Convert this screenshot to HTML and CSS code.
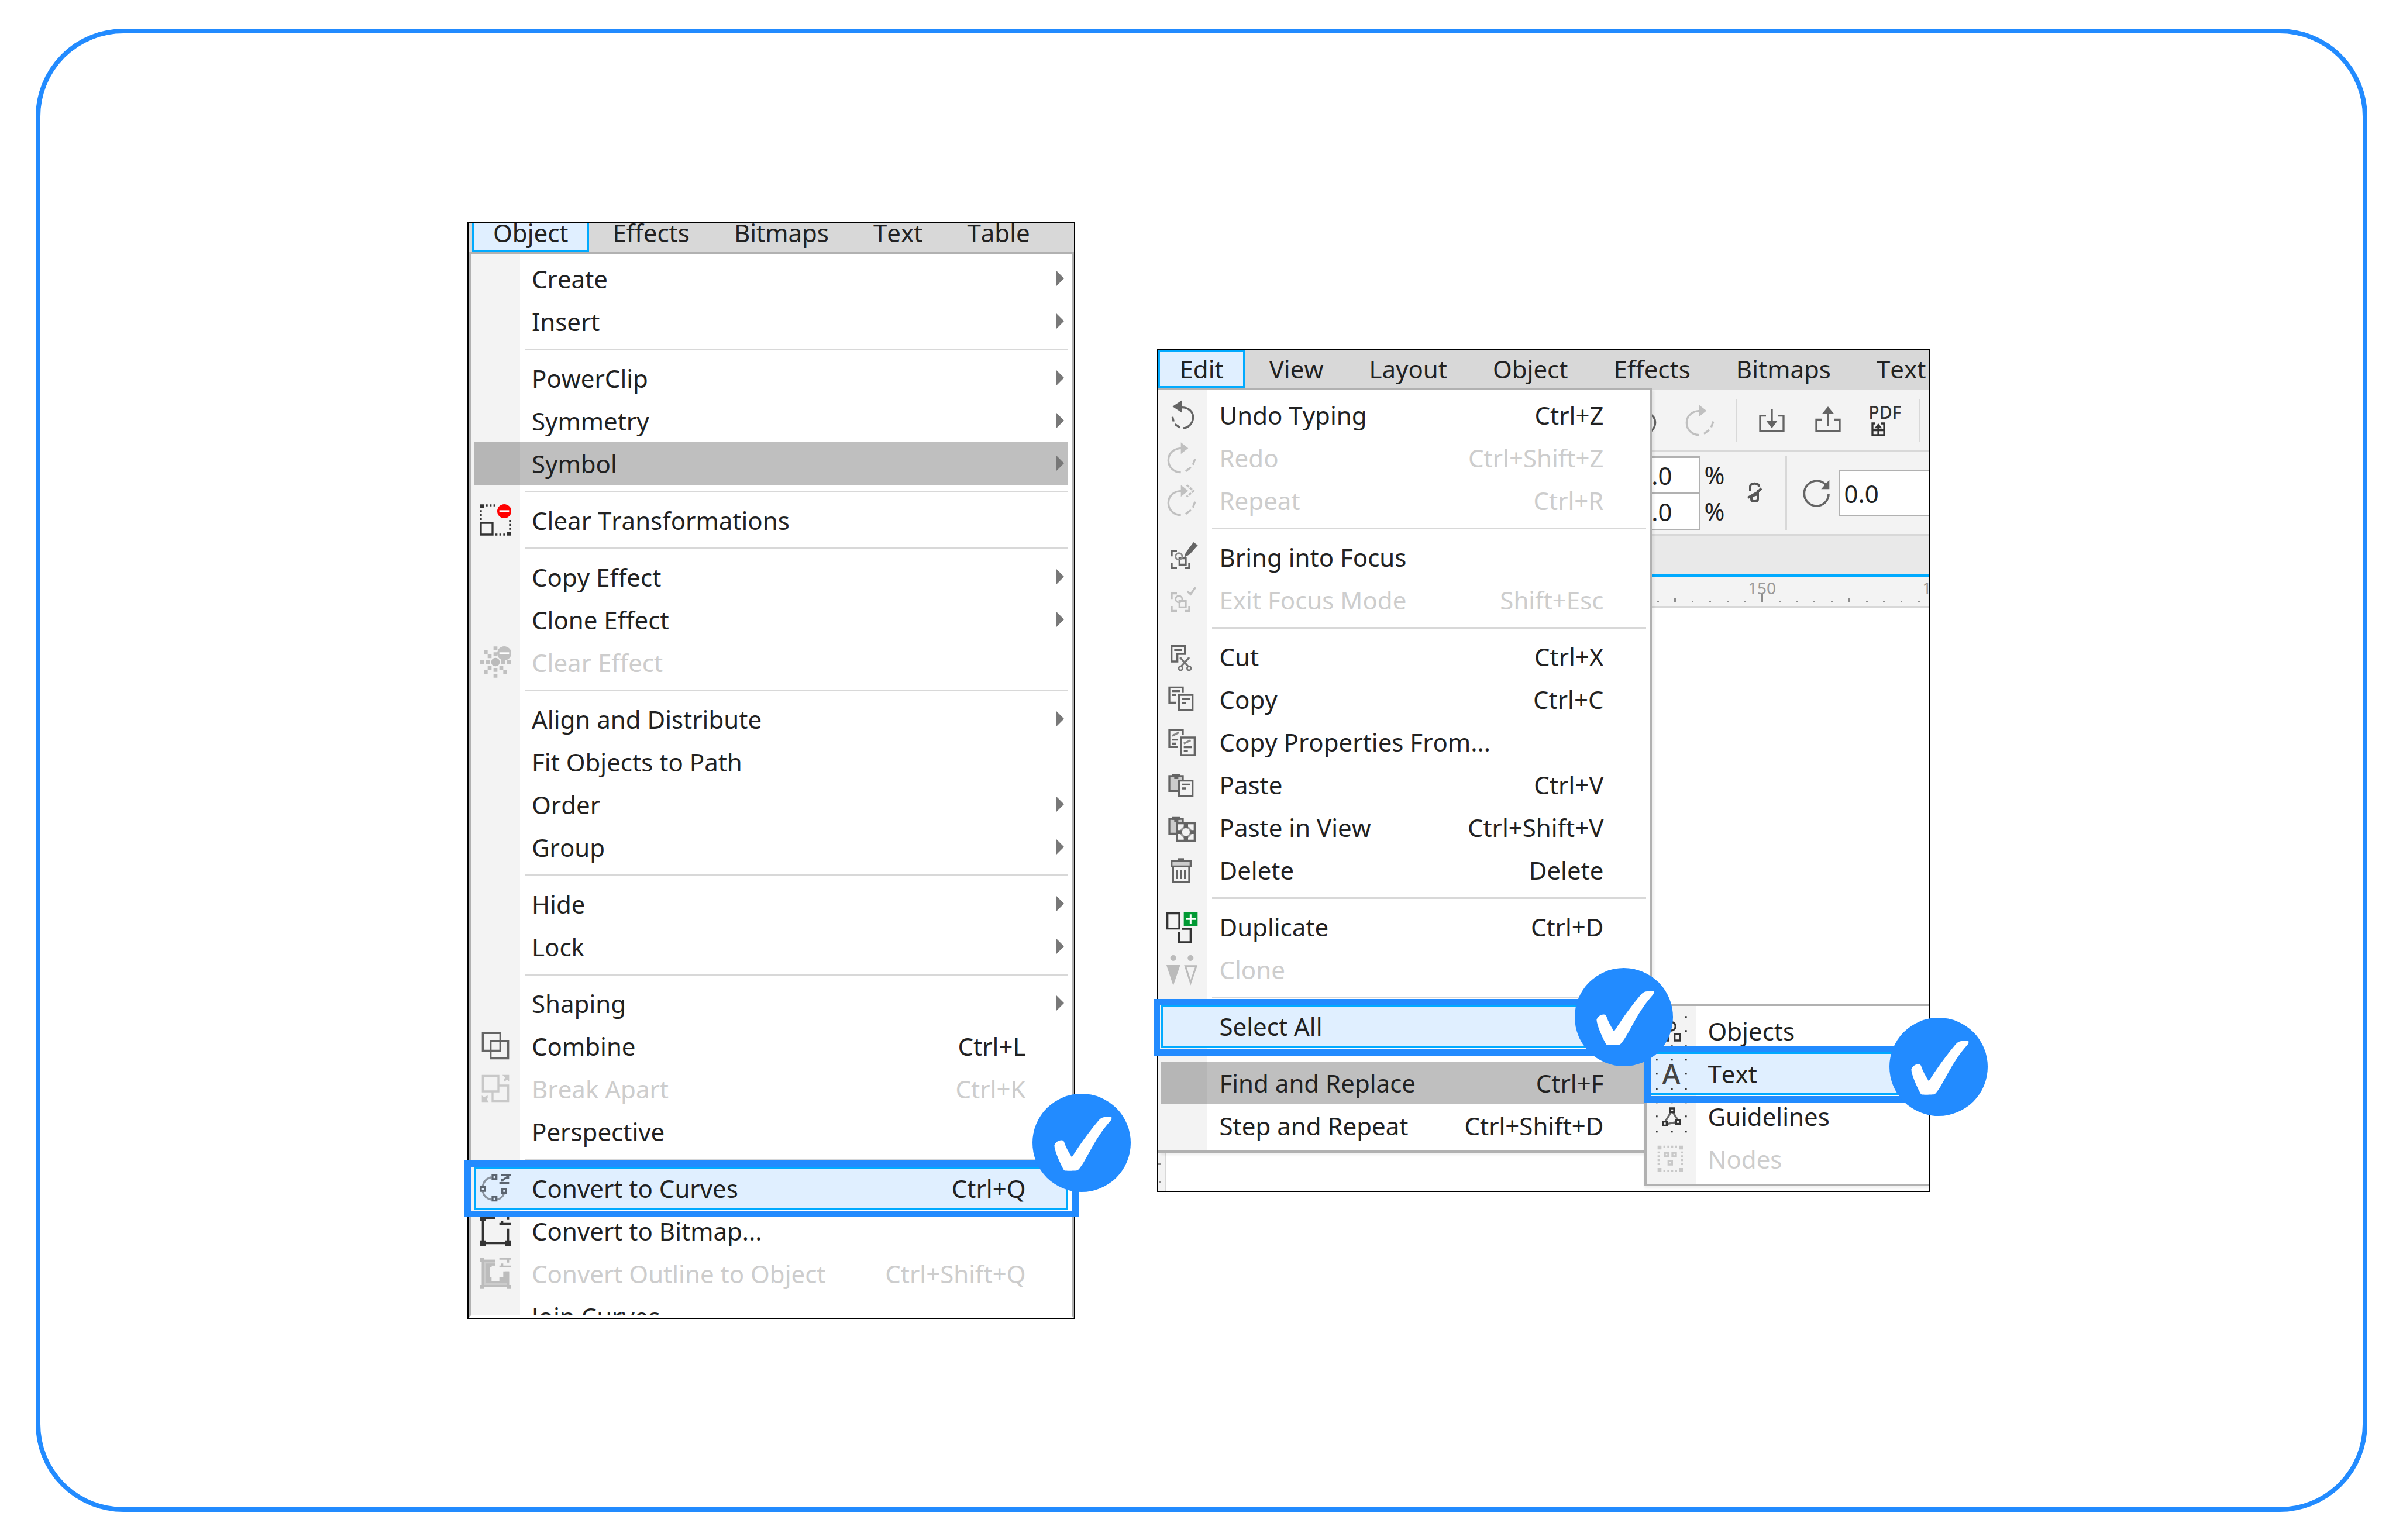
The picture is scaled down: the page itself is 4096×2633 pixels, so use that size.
FILE: index.html
```html
<!DOCTYPE html>
<html lang="en">
<head>
<meta charset="utf-8">
<title>Convert text to curves</title>
<link rel="stylesheet" href="styles.css">
</head>
<body>
<svg class="sprite" aria-hidden="true">
  <symbol id="arrow" viewBox="0 0 14 28"><path d="M0 0L14 14L0 28Z" fill="#787878"/></symbol>
  <symbol id="check" viewBox="0 0 168 168">
    <circle cx="84" cy="84" r="84" fill="#228bff"/>
    <path d="M37.4 88.5C39 83.500 43.500 79.500 49.600 79.500C52.500 79.500 53.800 81 54.600 83.800C57 91 61.500 99.500 67.200 108.500C72 101.500 76 95 80.200 88.900C90 74.500 101 60 112.600 46.200C115.500 42.800 118 41 121.500 40.200C126 39.300 130.500 39.200 134 39.600C136 40 135.800 42.500 134 45.400C129 51.500 123.500 57.500 118.400 65C106 82.500 96 103 87.800 116.700C84.500 122 81 127.500 77.500 130.800C74 131.900 59 131.900 55.700 131.600C53.500 131 53 129 51.500 126.500C46.500 117 37.800 97.500 37.400 88.500Z" fill="#fff"/>
  </symbol>
  <symbol id="undo" viewBox="0 0 18 18">
    <path d="M8 5C12 4.800 14.300 7.300 14.300 10C14.300 13 12 15.500 9 15.600" fill="none" stroke="currentColor" stroke-width="1"/>
    <path d="M7.500 15.300L5 13.600M4.300 12.200L3.700 9.800" fill="none" stroke="currentColor" stroke-width="1"/>
    <path d="M3.700 4.500L8.700 1.200V7.800Z" fill="currentColor"/>
  </symbol>
  <symbol id="redo" viewBox="0 0 18 18">
    <path d="M8.500 4C4.500 4 1.600 6.500 1.600 10.200C1.600 13.800 4.500 16.400 8 16.400" fill="none" stroke="currentColor" stroke-width="1"/>
    <path d="M10.500 15.800L13.200 13.800M14.200 12.500L15.300 9.500" fill="none" stroke="currentColor" stroke-width="1"/>
    <path d="M11.800 4L8 1V7Z" fill="currentColor"/>
  </symbol>
  <symbol id="clip" viewBox="0 0 18 18">
    <path d="M2.100 4.500H9V12.100H2.100Z" fill="#ccc" stroke="#646464"/>
    <path d="M3.500 3.500H7.700V5H6.700V6H4.600V5H3.500Z" fill="#646464"/>
  </symbol>
  <symbol id="dots" viewBox="0 0 18 18">
    <path d="M1.200 1.700h.8M9 1.700h.8M16.200 1.700h.8M1.200 8.900h.8M16.200 8.900h.8M1.200 16.700h.8M9 16.700h.8M16.200 16.700h.8" stroke="#333" stroke-width=".9"/>
  </symbol>
</svg>
<main class="frame">
  <section class="shot shot-object" aria-label="Object menu">
    <nav class="menubar menubar-cut">
      <button class="tab tab-open">Object</button>
      <button class="tab">Effects</button>
      <button class="tab">Bitmaps</button>
      <button class="tab">Text</button>
      <button class="tab">Table</button>
    </nav>
    <ul class="menu">
      <li><button class="row"><span class="icon"></span><span class="label">Create</span><svg class="arrow"><use href="#arrow"/></svg></button></li>
      <li><button class="row"><span class="icon"></span><span class="label">Insert</span><svg class="arrow"><use href="#arrow"/></svg></button></li>
      <li class="sep"></li>
      <li><button class="row"><span class="icon"></span><span class="label">PowerClip</span><svg class="arrow"><use href="#arrow"/></svg></button></li>
      <li><button class="row"><span class="icon"></span><span class="label">Symmetry</span><svg class="arrow"><use href="#arrow"/></svg></button></li>
      <li><button class="row row-dim"><span class="icon"></span><span class="label">Symbol</span><svg class="arrow"><use href="#arrow"/></svg></button></li>
      <li class="sep"></li>
      <li><button class="row">
        <svg class="icon" viewBox="0 0 18 18">
          <path d="M1 1h2v2h-2zM4 1h1v1h-1zM6 1h1v1h-1zM8 1h1v1h-1zM1 4h1v1h-1zM1 6h1v1h-1zM1 8h1v1h-1zM9 16h1v1h-1zM11 16h1v1h-1zM13 16h1v1h-1zM15 15h2v2h-2zM16 9h1v1h-1zM16 11h1v1h-1zM16 13h1v1h-1z" fill="#333"/>
          <path d="M1.500 10.500h6v6h-6z" fill="none" stroke="#333"/>
          <circle cx="13.500" cy="4.500" r="3.600" fill="#f00"/><path d="M11 4h5v1h-5z" fill="#fff"/>
        </svg>
        <span class="label">Clear Transformations</span></button></li>
      <li class="sep"></li>
      <li><button class="row"><span class="icon"></span><span class="label">Copy Effect</span><svg class="arrow"><use href="#arrow"/></svg></button></li>
      <li><button class="row"><span class="icon"></span><span class="label">Clone Effect</span><svg class="arrow"><use href="#arrow"/></svg></button></li>
      <li><button class="row" disabled>
        <svg class="icon" viewBox="0 0 18 18">
          <path d="M8 1h2v2h-2zM8 4h2v2h-2zM3 3h2v2h-2zM5 5h2v2h-2zM1 8h2v2h-2zM4 8h2v2h-2zM12 8h2v2h-2zM15 8h2v2h-2zM5 11h2v2h-2zM3 13h2v2h-2zM8 12h2v2h-2zM8 15h2v2h-2zM11 11h2v2h-2zM13 13h2v2h-2z" fill="#c0c0c0"/>
          <circle cx="9" cy="9" r="2.200" fill="#bbb"/>
          <circle cx="13.500" cy="4.500" r="3.600" fill="#c0c0c0"/><path d="M11 4h5v1h-5z" fill="#fff"/>
        </svg>
        <span class="label">Clear Effect</span></button></li>
      <li class="sep"></li>
      <li><button class="row"><span class="icon"></span><span class="label">Align and Distribute</span><svg class="arrow"><use href="#arrow"/></svg></button></li>
      <li><button class="row"><span class="icon"></span><span class="label">Fit Objects to Path</span></button></li>
      <li><button class="row"><span class="icon"></span><span class="label">Order</span><svg class="arrow"><use href="#arrow"/></svg></button></li>
      <li><button class="row"><span class="icon"></span><span class="label">Group</span><svg class="arrow"><use href="#arrow"/></svg></button></li>
      <li class="sep"></li>
      <li><button class="row"><span class="icon"></span><span class="label">Hide</span><svg class="arrow"><use href="#arrow"/></svg></button></li>
      <li><button class="row"><span class="icon"></span><span class="label">Lock</span><svg class="arrow"><use href="#arrow"/></svg></button></li>
      <li class="sep"></li>
      <li><button class="row"><span class="icon"></span><span class="label">Shaping</span><svg class="arrow"><use href="#arrow"/></svg></button></li>
      <li><button class="row">
        <svg class="icon" viewBox="0 0 18 18"><path d="M2.500 2.500h9v9h-9zM6.500 6.500h9v9h-9z" fill="none" stroke="#646464"/></svg>
        <span class="label">Combine</span><kbd class="keys">Ctrl+L</kbd></button></li>
      <li><button class="row" disabled>
        <svg class="icon" viewBox="0 0 18 18"><path d="M2.500 2.500h8v8h-8zM10.500 7.500h5v8h-8v-5" fill="none" stroke="#c8c8c8"/><path d="M12.500 2H16V5.500L15 4.500L13.500 5.500V4L14 3.500ZM5.500 16H2V12.500L3 13.500L5 12.500V14L4.500 14.500Z" fill="#c8c8c8"/></svg>
        <span class="label">Break Apart</span><kbd class="keys">Ctrl+K</kbd></button></li>
      <li><button class="row"><span class="icon"></span><span class="label">Perspective</span></button></li>
      <li class="sep"></li>
      <li class="marked"><button class="row row-active">
        <svg class="icon" viewBox="0 0 18 18">
          <path d="M7 3.500C4.500 4 3 5.800 2.500 8M2.500 11C3 13 4.500 14.600 7 15M10 15C11.500 14.500 12.800 13.500 13.300 12" fill="none" stroke="#8a939e"/>
          <path d="M7.500 2.500h2v2h-2zM1.500 8.500h2v2h-2zM7.500 13.500h2v2h-2zM12.500 9.500h2v2h-2z" fill="#e0efff" stroke="#5b646f"/>
          <path d="M12 2.500H17M15.500 3V4.500M15.500 3L12 5.500M11 6.500H16M12.500 5.800V4.500" fill="none" stroke="#5b646f"/>
        </svg>
        <span class="label">Convert to Curves</span><kbd class="keys">Ctrl+Q</kbd></button>
        <span class="mark mark-curves"></span><svg class="badge badge-curves"><use href="#check"/></svg></li>
      <li><button class="row">
        <svg class="icon" viewBox="0 0 18 18">
          <path d="M1 1h3v3h-3zM1 14h3v3h-3zM14 14h3v3h-3z" fill="#333"/>
          <path d="M2.500 2.500V15.500H15.500V8M2.500 2.500H9M12 1.500H17M15.500 2V3.500M11 5.500H17M12.500 5V4" fill="none" stroke="#333"/>
        </svg>
        <span class="label">Convert to Bitmap...</span></button></li>
      <li><button class="row" disabled>
        <svg class="icon" viewBox="0 0 18 18">
          <path d="M2 2H9V5H7V6H6V13H13V12H14V8H16V16H2Z" fill="#ccc"/>
          <path d="M4 4H9V5H7V6H6V11H7V13H11V11H13V8H15V14H4Z" fill="#bcbcbc"/>
          <path d="M1 1h2v2h-2zM1 15h2v2h-2zM15 15h2v2h-2z" fill="#bcbcbc"/>
          <path d="M2.500 2.500V15.500H15.500V8M2.500 2.500H9M11 1.500H17M15.500 2V3.500M11 5.500H17M12.500 5V4" fill="none" stroke="#bcbcbc"/>
        </svg>
        <span class="label">Convert Outline to Object</span><kbd class="keys">Ctrl+Shift+Q</kbd></button></li>
      <li class="cut"><button class="row"><span class="icon"></span><span class="label">Join Curves</span></button></li>
    </ul>
  </section>

  <section class="shot shot-edit" aria-label="Edit menu">
    <nav class="menubar">
      <button class="tab tab-open">Edit</button>
      <button class="tab">View</button>
      <button class="tab">Layout</button>
      <button class="tab">Object</button>
      <button class="tab">Effects</button>
      <button class="tab">Bitmaps</button>
      <button class="tab">Text</button>
    </nav>
    <div class="stage">
      <div class="workspace">
        <div class="toolbar">
          <svg class="icon tool"><use href="#undo"/></svg>
          <svg class="icon tool tool-off"><use href="#redo"/></svg>
          <span class="rule"></span>
          <svg class="icon" viewBox="0 0 18 18"><path d="M6 6.500H3V14.500H15V6.500H12M9 3V11" fill="none" stroke="#646464"/><path d="M6 9H12L9 13Z" fill="#646464"/></svg>
          <svg class="icon" viewBox="0 0 18 18"><path d="M6 8.500H3V14.500H15V8.500H12M9 4V12" fill="none" stroke="#646464"/><path d="M6 5.500H12L9 1.800Z" fill="#646464"/></svg>
          <svg class="icon" viewBox="0 0 18 18"><text class="pdf" x="1" y="8">PDF</text><path d="M4.500 10.500H3V16.500H9V10.500H7.500M6 11V16.500M3.500 14H8.500" fill="none" stroke="#333"/><path d="M4 13H8L6 10.500Z" fill="#333"/></svg>
          <span class="rule"></span>
        </div>
        <div class="propbar">
          <div class="scales">
            <label class="scale"><input class="field" value="100.0">%</label>
            <label class="scale"><input class="field" value="100.0">%</label>
          </div>
          <svg class="lock" viewBox="0 0 40 40"><path d="M11 17V9C11 2 26 2 26 9M30 12L25 17M24 14V31C24 35 13 35 13 31V25L24 22M7 28L23 19" fill="none" stroke="#555" stroke-width="4"/></svg>
          <span class="rule rule-tall"></span>
          <svg class="icon spin" viewBox="0 0 18 18"><path d="M14.500 5.500C13 3.500 11.500 2.700 9.500 2.700C5.800 2.700 2.800 5.500 2.800 9.200C2.800 12.800 5.500 15.600 9 15.600C12.500 15.600 15.300 13 15.300 9.500" fill="none" stroke="#646464" stroke-width="1.100"/><path d="M15.700 2.200V7H11.500Z" fill="#646464"/></svg>
          <input class="field angle" aria-label="Angle of rotation" value="0.0">
        </div>
        <div class="doctabs"></div>
        <svg class="ruler" viewBox="0 0 474 50">
          <path d="M187 30h3v14h-3zM38 36h3v8h-3zM336 36h3v8h-3zM9 41h3v3h-3zM68 41h3v3h-3zM98 41h3v3h-3zM128 41h3v3h-3zM157 41h3v3h-3zM217 41h3v3h-3zM247 41h3v3h-3zM276 41h3v3h-3zM306 41h3v3h-3zM366 41h3v3h-3zM395 41h3v3h-3zM425 41h3v3h-3zM455 41h3v3h-3z" fill="#8c8c8c"/>
          <text class="num" x="188" y="30">150</text><text class="num" x="486" y="30">160</text>
        </svg>
        <div class="canvas">
          <div class="vruler"><svg class="vticks" viewBox="0 0 5 65"><path d="M0 18h5v3h-5zM2 48h3v3h-3z" fill="#8c8c8c"/></svg></div>
        </div>
      </div>

      <ul class="menu menu-edit">
        <li><button class="row"><svg class="icon tool"><use href="#undo"/></svg><span class="label">Undo Typing</span><kbd class="keys">Ctrl+Z</kbd></button></li>
        <li><button class="row" disabled><svg class="icon tool-off"><use href="#redo"/></svg><span class="label">Redo</span><kbd class="keys">Ctrl+Shift+Z</kbd></button></li>
        <li><button class="row" disabled><svg class="icon tool-off" viewBox="0 0 18 18"><use href="#redo"/><path d="M11 1L14.500 4L11 7" fill="none" stroke="currentColor" stroke-dasharray="1.500 .6"/></svg><span class="label">Repeat</span><kbd class="keys">Ctrl+R</kbd></button></li>
        <li class="sep"></li>
        <li><button class="row">
          <svg class="icon tool" viewBox="0 0 18 18"><path d="M6 5.600H3.300V8.500M3.300 12V14.500H6M10 14.500H12.300V12M7.300 9.500h3.200v3.200h-3.200z" fill="none" stroke="currentColor"/><circle cx="7" cy="8.500" r="1.700" fill="none" stroke="#8a8a8a" stroke-width=".8"/><path d="M9.700 9L10.500 6.500L14.500 1.200L16.700 2.800L12.500 7.500Z" fill="currentColor"/></svg>
          <span class="label">Bring into Focus</span></button></li>
        <li><button class="row" disabled>
          <svg class="icon tool-off" viewBox="0 0 18 18"><path d="M6 5.600H3.300V8.500M3.300 12V14.500H6M10 14.500H12.300V12M7.300 9.500h3.200v3.200h-3.200zM11.300 4.500L13 6L15.500 2.500" fill="none" stroke="currentColor"/><circle cx="7" cy="8.500" r="1.700" fill="none" stroke="currentColor" stroke-width=".8"/></svg>
          <span class="label">Exit Focus Mode</span><kbd class="keys">Shift+Esc</kbd></button></li>
        <li class="sep"></li>
        <li><button class="row">
          <svg class="icon" viewBox="0 0 18 18"><path d="M3.200 3.500H10.100V7.500H6.200V11.400H3.200ZM4.600 5.500H8.600" fill="none" stroke="#646464"/><path d="M7.600 9.300L11.900 14.100M12.300 9.300L8 14.100" stroke="#757575"/><circle cx="7.900" cy="14.900" r="1" fill="none" stroke="#757575" stroke-width=".8"/><circle cx="12.200" cy="14.900" r="1" fill="none" stroke="#757575" stroke-width=".8"/></svg>
          <span class="label">Cut</span><kbd class="keys">Ctrl+X</kbd></button></li>
        <li><button class="row">
          <svg class="icon" viewBox="0 0 18 18"><path d="M5.500 10.600H2.100V2.800H9V5.300M3.500 4.700H7.700M3.500 6.700H5.500M7.100 6.600H14V14.400H7.100ZM8.500 8.800H12.700M8.500 10.800H10.600" fill="none" stroke="#646464"/></svg>
          <span class="label">Copy</span><kbd class="keys">Ctrl+C</kbd></button></li>
        <li><button class="row">
          <svg class="icon" viewBox="0 0 18 18"><path d="M6.500 11.500H2.100V2.600H9V5.300M3.500 7.700H6.500M3.500 9.700H5.500M8.200 6.600H15.100V15.600H8.200ZM9.500 11.600H13.500M9.500 13.600H11.600" fill="none" stroke="#646464"/><path d="M3.500 5.700L5 5L7 4M9.500 9.700L11 9L13 8" fill="none" stroke="#888"/></svg>
          <span class="label">Copy Properties From...</span></button></li>
        <li><button class="row">
          <svg class="icon" viewBox="0 0 18 18"><use href="#clip"/><path d="M7.100 6.800H14V14.600H7.100ZM8.500 8.800H12.700M8.500 10.800H10.600" fill="#f3f3f3" stroke="#646464"/></svg>
          <span class="label">Paste</span><kbd class="keys">Ctrl+V</kbd></button></li>
        <li><button class="row">
          <svg class="icon" viewBox="0 0 18 18"><use href="#clip"/><path d="M6.100 6.800H15.100V15.700H6.100Z" fill="#f3f3f3" stroke="#646464"/><circle cx="10.600" cy="11.300" r="2.500" fill="none" stroke="#999"/><path d="M9.500 7h2.200v2h-2.200zM9.500 13.500h2.200v2h-2.200zM6.500 10.300h2v2h-2zM12.700 10.300h2v2h-2z" fill="#646464"/></svg>
          <span class="label">Paste in View</span><kbd class="keys">Ctrl+Shift+V</kbd></button></li>
        <li><button class="row">
          <svg class="icon" viewBox="0 0 18 18"><path d="M3.200 4.300H13V7H3.200Z" fill="#ccc" stroke="#646464"/><path d="M6.600 2.800h3v1.500h-3z" fill="#646464"/><path d="M4 7.500V14.900H12.300V7.500M6.100 9V13.500M8.100 9V13.500M10.100 9V13.500" fill="none" stroke="#646464"/></svg>
          <span class="label">Delete</span><kbd class="keys">Delete</kbd></button></li>
        <li class="sep"></li>
        <li><button class="row">
          <svg class="icon" viewBox="0 0 18 18"><path d="M1.100 2H7.200V9.800H1.100ZM8.500 9.900H13V16.800H7.100V11.500" fill="none" stroke="#333"/><path d="M9.500 1.400h7.100v7h-7.100z" fill="#093"/><path d="M10.500 4.900H15.600M13 2.500V7.300" stroke="#fff" stroke-width=".9"/></svg>
          <span class="label">Duplicate</span><kbd class="keys">Ctrl+D</kbd></button></li>
        <li><button class="row" disabled>
          <svg class="icon" viewBox="0 0 18 18"><circle cx="4.100" cy="3" r="1.500" fill="#bbb"/><circle cx="13" cy="3" r="1.500" fill="#bbb"/><path d="M.6 6.600H7.700L4.100 17.200Z" fill="#bbb"/><path d="M10.300 7.100H15.900L13 15.600Z" fill="none" stroke="#bbb" stroke-width=".9"/></svg>
          <span class="label">Clone</span></button></li>
        <li class="sep"></li>
        <li class="marked"><button class="row row-active"><span class="icon"></span><span class="label">Select All</span></button>
          <span class="mark mark-all"></span></li>
        <li class="sep"></li>
        <li><button class="row row-dim"><span class="icon"></span><span class="label">Find and Replace</span><kbd class="keys">Ctrl+F</kbd></button></li>
        <li><button class="row"><span class="icon"></span><span class="label">Step and Repeat</span><kbd class="keys">Ctrl+Shift+D</kbd></button></li>
      </ul>

      <ul class="menu submenu">
        <li><button class="row">
          <svg class="icon" viewBox="0 0 18 18"><use href="#dots"/><path d="M10.700 10.600h2.800v3.200h-2.800zM4.500 10.600h3v3.200h-3z" fill="none" stroke="#333"/><circle cx="9" cy="6.500" r="2.200" fill="none" stroke="#333"/></svg>
          <span class="label">Objects</span></button></li>
        <li class="marked"><button class="row row-active">
          <svg class="icon" viewBox="0 0 18 18"><use href="#dots"/><text class="glyph" x="9" y="14">A</text></svg>
          <span class="label">Text</span></button>
          <span class="mark mark-text"></span><svg class="badge badge-text"><use href="#check"/></svg></li>
        <li><button class="row">
          <svg class="icon" viewBox="0 0 18 18"><use href="#dots"/><path d="M8.700 7L6 11.500M10 7L12.500 11M7 12.800L11 12" stroke="#666"/><path d="M8.500 4.800h2v2h-2zM4.700 11.600h2v2h-2zM11.500 10.700h2v2h-2z" fill="#f3f3f3" stroke="#333"/></svg>
          <span class="label">Guidelines</span></button></li>
        <li><button class="row" disabled>
          <svg class="icon" viewBox="0 0 18 18"><path d="M2 2h2v2h-2zM13 2h2v2h-2zM2 13.500h2v2h-2zM13 13.500h2v2h-2zM5 2h1v1h-1zM7 2h1v1h-1zM9 2h1v1h-1zM11 2h1v1h-1zM5 14.500h1v1h-1zM7 14.500h1v1h-1zM9 14.500h1v1h-1zM11 14.500h1v1h-1zM2 5h1v1h-1zM2 7h1v1h-1zM2 9h1v1h-1zM2 11h1v1h-1zM14 5h1v1h-1zM14 7h1v1h-1zM14 9h1v1h-1zM14 11h1v1h-1z" fill="#c8c8c8"/><path d="M5.700 5.700h1.800v1.800h-1.800zM9.600 5.700h1.800v1.800h-1.800zM7.600 9.900h1.800v1.800h-1.800z" fill="none" stroke="#c8c8c8"/></svg>
          <span class="label">Nodes</span></button></li>
      </ul>
      <svg class="badge badge-all"><use href="#check"/></svg>
    </div>
  </section>
</main>
</body>
</html>
```
FILE: styles.css
```css
* {
  box-sizing: border-box;
}

body {
  margin: 0;
  background: #fff;
  color: #222;
  font: 42px/73px "Noto Sans", sans-serif;
  font-kerning: none;
}

button,
input,
kbd {
  font: inherit;
  font-kerning: none;
  color: inherit;
}

ul {
  margin: 0;
  padding: 0;
  list-style: none;
}

svg {
  display: block;
  flex: none;
}

.sprite {
  position: absolute;
  width: 0;
  height: 0;
}

.frame {
  display: flex;
  align-items: center;
  gap: 140px;
  min-height: calc(100vh - 97px);
  margin: 49px 49px 48px 61px;
  padding: 0 739px 0 730px;
  border: 8px solid #228bff;
  border-radius: 150px;
}

.shot {
  min-width: 0;
  border: 2px solid #000;
  background: #fff;
}

.shot-object {
  flex: 1039 1 0;
}

.shot-edit {
  flex: 1322 1 0;
}

/* Menu bar */
.menubar {
  display: flex;
  gap: 6px;
  overflow: hidden;
  background: #d8d8d8;
}

.menubar-cut {
  align-items: flex-end;
  gap: 4px;
  height: 49px;
  padding-left: 6px;
}

.tab {
  flex: none;
  height: 65px;
  padding: 0 33px;
  border: 3px solid transparent;
  background: none;
  line-height: 59px;
}

.tab-open {
  border-color: #00aaff;
  background: #e0efff;
}

/* Drop-down menus */
.menu {
  padding: 6px 0;
  border: 4px solid #b1b1b1;
  background: linear-gradient(to right, #f3f3f3 84px, #fff 84px);
}

.shot-object .menu {
  padding-bottom: 0;
  border-bottom: 5px solid #fff;
}

.row {
  display: flex;
  align-items: center;
  width: calc(100% - 11px);
  height: 73px;
  margin: 0 6px 0 5px;
  padding: 0 7px;
  border: 0;
  background: none;
  line-height: 73px;
  text-align: left;
  white-space: nowrap;
}

.row:disabled {
  color: #cdcdcd;
}

.row-dim {
  background: rgba(0, 0, 0, 0.25);
}

.row-active {
  background: #e0efff;
  box-shadow: inset 0 0 0 3px #00aaff;
}

.icon {
  flex: none;
  width: 60px;
  height: 60px;
}

.tool {
  color: #646464;
}

.tool-off {
  color: #c0c0c0;
}

.label {
  flex: 1;
  margin-left: 32px;
}

.keys {
  margin-right: 66px;
}

.arrow {
  width: 14px;
  height: 28px;
}

.sep {
  height: 24px;
  margin: 0 6px 0 92px;
  border-top: 10px solid #fff;
  border-bottom: 11px solid #fff;
  background: #d8d8d8;
}

.cut {
  height: 35px;
  overflow: hidden;
}

.glyph {
  fill: #444;
  font-size: 14px;
  font-weight: 500;
  text-anchor: middle;
}

/* Highlights over the rows to click */
.marked {
  position: relative;
}

.mark {
  position: absolute;
  border: 11px solid #228bff;
}

.mark-curves {
  inset: -11px -12px -13px -11px;
}

.mark-all {
  inset: -10px 0 -14px -8px;
}

.mark-text {
  inset: -11px -22px -13px -4px;
}

.badge {
  position: absolute;
  width: 168px;
  height: 168px;
}

.badge-curves {
  top: -125px;
  right: -101px;
}

.badge-text {
  top: -59px;
  right: -100px;
}

.badge-all {
  top: 992px;
  left: 712px;
}

/* Application window behind the Edit menu */
.stage {
  position: relative;
  display: grid;
}

.workspace,
.menu-edit {
  grid-area: 1 / 1;
}

.menu-edit {
  position: relative;
  width: 844px;
  margin-bottom: 65px;
  border-left: 0;
  box-shadow: 4px 4px 4px rgba(0, 0, 0, 0.06);
}

.submenu {
  position: absolute;
  left: 831px;
  right: 0;
  bottom: 8px;
  border-right: 0;
  box-shadow: 0 4px 4px rgba(0, 0, 0, 0.06);
}

.submenu .row {
  width: calc(100% - 5px);
  margin-right: 0;
}

.workspace {
  display: flex;
  flex-direction: column;
  overflow: hidden;
  border-top: 4px solid #d8d8d8;
  background: #f3f3f3;
}

.toolbar {
  display: flex;
  align-items: center;
  gap: 36px;
  height: 106px;
  padding-left: 802px;
  border-bottom: 3px solid #d8d8d8;
}

.rule {
  flex: none;
  width: 3px;
  height: 73px;
  margin: 0 -7px;
  background: #d8d8d8;
}

.pdf {
  fill: #333;
  font-size: 9px;
  font-weight: 500;
}

.propbar {
  display: flex;
  align-items: center;
  height: 143px;
  padding-left: 757px;
  border-bottom: 3px solid #d8d8d8;
}

.scale {
  display: flex;
  align-items: center;
  gap: 6px;
  height: 62px;
  line-height: 62px;
}

.field {
  width: 170px;
  height: 65px;
  padding: 0 46px 0 0;
  border: 3px solid #b1b1b1;
  border-radius: 0;
  background: #fff;
  text-align: right;
}

.lock {
  width: 40px;
  height: 40px;
  margin-left: 33px;
}

.rule-tall {
  height: 127px;
  margin: 0 20px 0 31px;
}

.angle {
  flex: 1;
  height: 80px;
  margin: 0 -10px 0 8px;
  padding: 0 0 0 6px;
  text-align: left;
}

.doctabs {
  height: 70px;
  border-bottom: 4px solid #00aaff;
  background: #e9e9e9;
}

.ruler {
  width: 474px;
  height: 50px;
  margin-left: 844px;
}

.num {
  fill: #999;
  font-size: 28px;
  text-anchor: middle;
}

.canvas {
  flex: 1;
  display: flex;
  border-top: 3px solid #d8d8d8;
  background: #fff;
}

.vruler {
  display: flex;
  align-items: flex-end;
  width: 14px;
  border-right: 3px solid #d8d8d8;
  background: #f3f3f3;
}

.vticks {
  width: 5px;
  height: 65px;
}
```
